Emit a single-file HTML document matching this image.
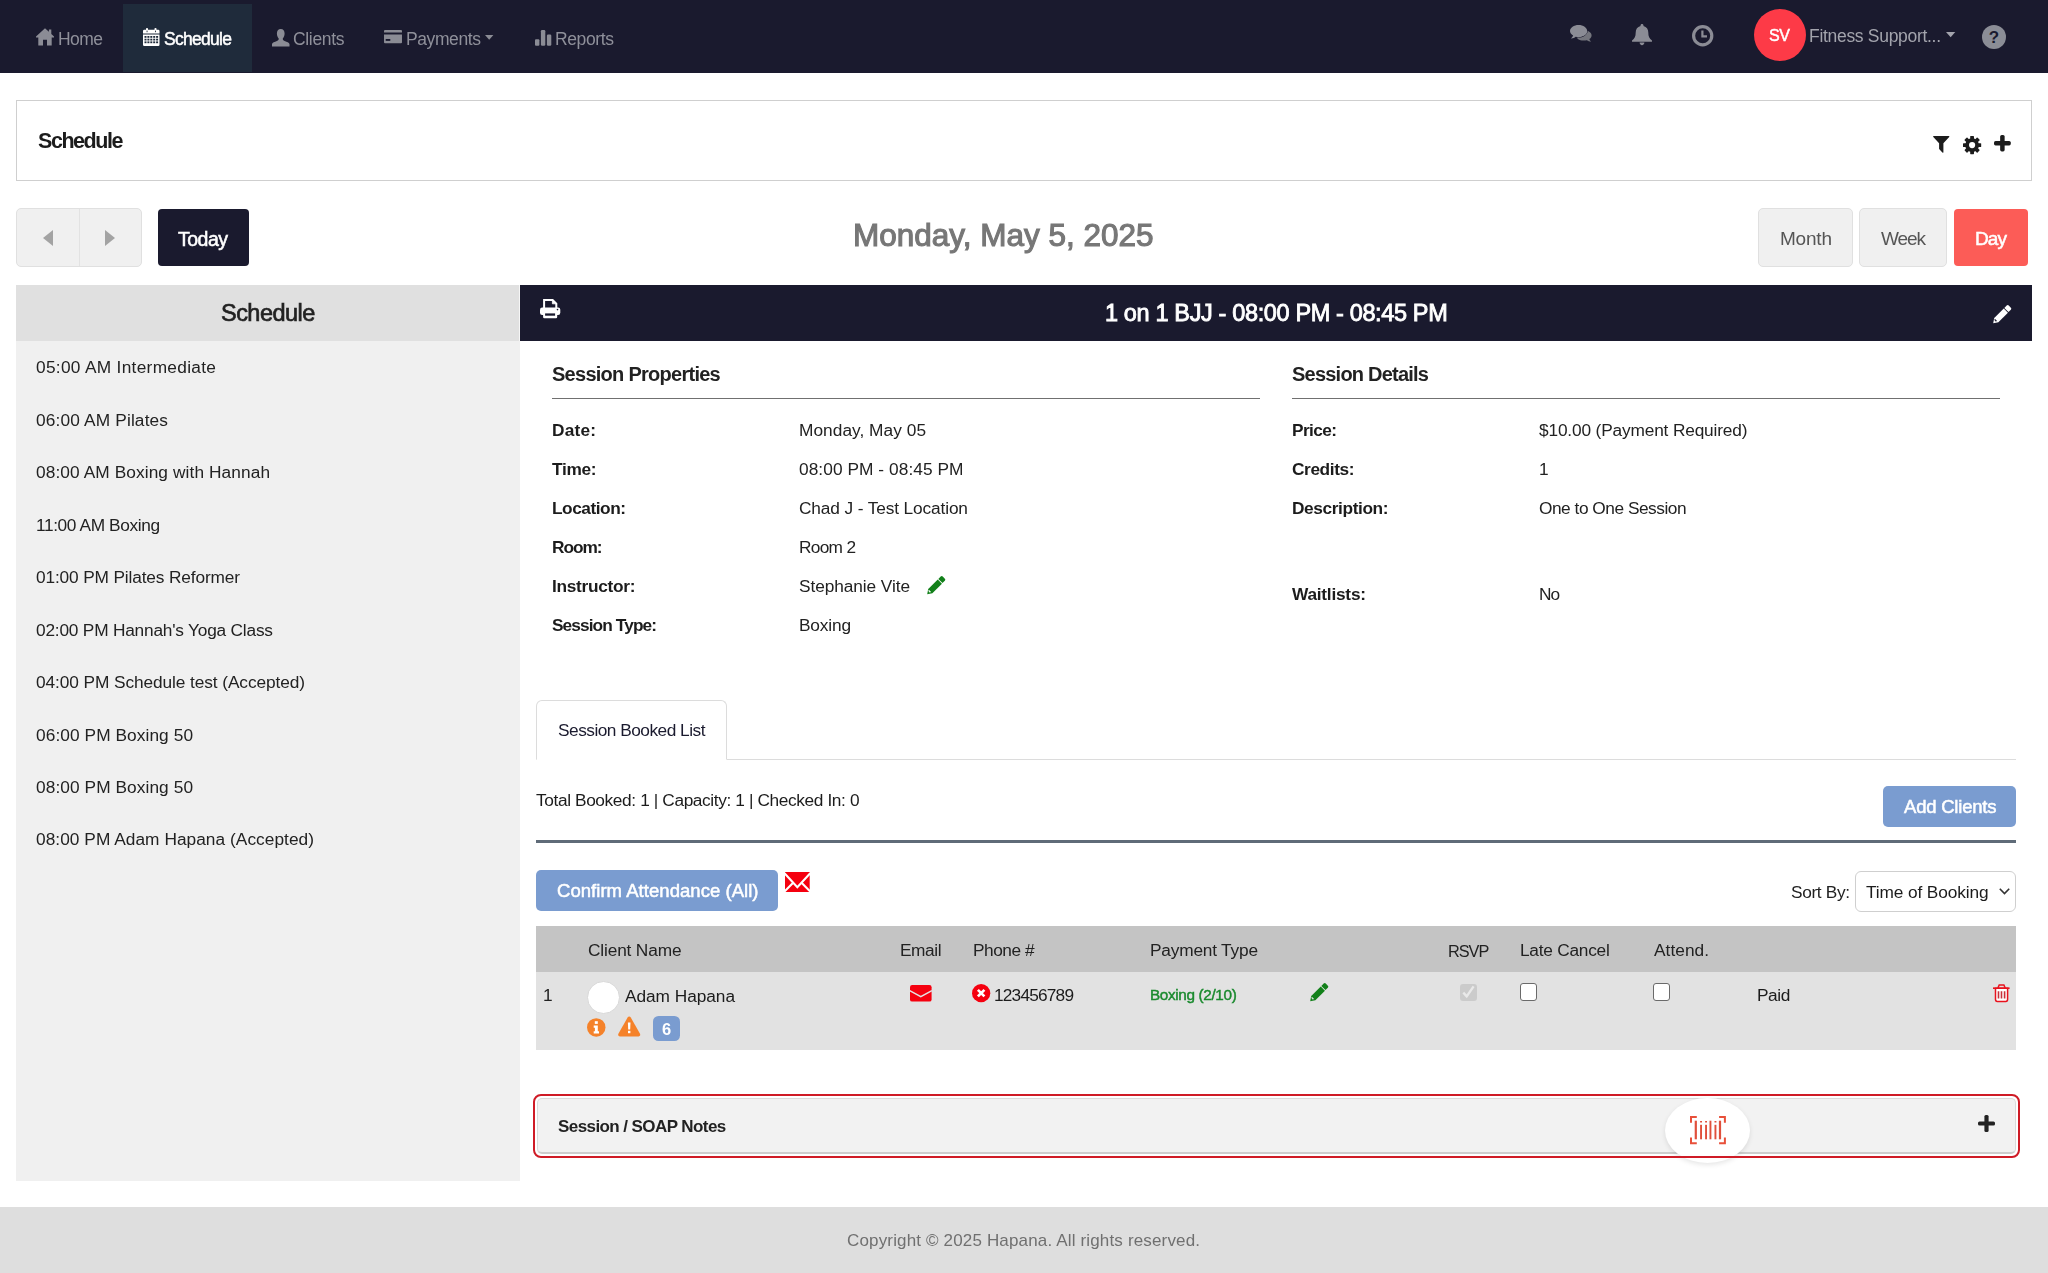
<!DOCTYPE html>
<html lang="en">
<head>
<meta charset="utf-8">
<title>Schedule</title>
<style>
html,body{margin:0;padding:0;background:#fff;}
body{width:2048px;height:1273px;position:relative;overflow:hidden;font-family:"Liberation Sans",sans-serif;}
.a{position:absolute;box-sizing:border-box;}
.t{will-change:transform;position:absolute;white-space:nowrap;line-height:1;font-family:"Liberation Sans",sans-serif;}
svg{position:absolute;overflow:visible;}
</style>
</head>
<body>
<!-- NAV -->
<div class="a" style="left:0;top:0;width:2048px;height:73px;background:#1a1a2e;"></div>
<div class="a" style="left:123px;top:4px;width:129px;height:68px;background:#1f2b3b;"></div>
<div class="a" style="left:1753.5px;top:9px;width:52px;height:52px;border-radius:50%;background:#fd3a47;"></div>

<!-- PAGE HEADER CARD -->
<div class="a" style="left:16px;top:100px;width:2016px;height:81px;border:1px solid #cfcfcf;background:#fff;"></div>

<!-- CONTROLS -->
<div class="a" style="left:16px;top:208px;width:126px;height:59px;background:#f0f0f0;border:1px solid #e0e0e0;border-radius:5px;"></div>
<div class="a" style="left:79px;top:209px;width:1px;height:57px;background:#e2e2e2;"></div>
<div class="a" style="left:157.5px;top:209px;width:91px;height:57px;background:#1a1a2e;border-radius:4px;"></div>
<div class="a" style="left:1758px;top:208px;width:95px;height:59px;background:#f0f0f0;border:1px solid #e0e0e0;border-radius:5px;"></div>
<div class="a" style="left:1859px;top:208px;width:88px;height:59px;background:#f0f0f0;border:1px solid #e0e0e0;border-radius:5px;"></div>
<div class="a" style="left:1954px;top:209px;width:74px;height:57px;background:#fc5c57;border-radius:4px;"></div>

<!-- LEFT PANEL -->
<div class="a" style="left:16px;top:285px;width:504px;height:895.5px;background:#f0f0f0;"></div>
<div class="a" style="left:16px;top:285px;width:503px;height:55.5px;background:#e0e0e0;"></div>
<div class="a" style="left:519px;top:285px;width:1px;height:55.5px;background:#f6f6f6;"></div>

<!-- RIGHT PANEL -->
<div class="a" style="left:520px;top:285px;width:1512px;height:55.5px;background:#1a1a2e;"></div>
<div class="a" style="left:552px;top:398px;width:708px;height:1px;background:#707070;"></div>
<div class="a" style="left:1292px;top:398px;width:708px;height:1px;background:#707070;"></div>

<!-- TABS -->
<div class="a" style="left:536px;top:758.5px;width:1480px;height:1px;background:#dcdcdc;"></div>
<div class="a" style="left:536px;top:700px;width:191px;height:59.5px;border:1px solid #dcdcdc;border-bottom:1px solid #fff;border-radius:6px 6px 0 0;background:#fff;"></div>

<!-- BOOKED BAR -->
<div class="a" style="left:1883px;top:786px;width:133px;height:41px;background:#7a9cd0;border-radius:5px;"></div>
<div class="a" style="left:536px;top:840px;width:1480px;height:3px;background:#5f6b78;"></div>
<div class="a" style="left:536px;top:870px;width:242px;height:41px;background:#7a9cd0;border-radius:5px;"></div>
<div class="a" style="left:1855px;top:870.5px;width:161px;height:41.5px;background:#fff;border:1px solid #cfcfcf;border-radius:6px;"></div>

<!-- TABLE -->
<div class="a" style="left:536px;top:926px;width:1480px;height:46px;background:#c4c4c4;"></div>
<div class="a" style="left:536px;top:972px;width:1480px;height:77.5px;background:#e2e2e2;"></div>
<div class="a" style="left:587px;top:981px;width:33px;height:33px;border-radius:50%;background:#fff;border:1px solid #d8d8d8;"></div>
<div class="a" style="left:653px;top:1016px;width:27px;height:24.5px;border-radius:5.5px;background:#7a9cd0;"></div>
<!-- checkboxes -->
<div class="a" style="left:1460px;top:983.5px;width:17px;height:17px;border-radius:3px;background:#cbcbcb;"></div>
<div class="a" style="left:1520px;top:983px;width:17px;height:17.5px;border-radius:3px;background:#fff;border:1.3px solid #6a6a6a;"></div>
<div class="a" style="left:1652.7px;top:983px;width:17px;height:17.5px;border-radius:3px;background:#fff;border:1.3px solid #6a6a6a;"></div>

<!-- SOAP -->
<div class="a" style="left:537px;top:1098px;width:1479px;height:55.5px;border:1px solid #dadada;border-bottom:2px solid #cdcdcd;border-radius:5px;background:#f2f2f2;"></div>
<div class="a" style="left:1665px;top:1097.5px;width:85px;height:65px;border-radius:50%;background:#fff;box-shadow:0 2px 5px rgba(0,0,0,0.10);"></div>
<div class="a" style="left:533px;top:1093.8px;width:1487px;height:64.7px;border:2.3px solid #cf1b26;border-radius:8px;background:transparent;"></div>

<!-- FOOTER -->
<div class="a" style="left:0;top:1207px;width:2048px;height:66px;background:#dedede;"></div>

<!-- nav icons -->
<svg style="left:36px;top:28px" width="18" height="18" viewBox="0 0 18 18"><path fill="#8b8c95" d="M9 0.2 L0 8.6 L0 9.6 L2.3 9.6 L2.3 17.6 L7 17.6 L7 11.8 L11 11.8 L11 17.6 L15.7 17.6 L15.7 9.6 L18 9.6 L18 8.6 L15.3 6.1 L15.3 1.6 L12.9 1.6 L12.9 3.8 Z"/></svg>
<svg style="left:142.5px;top:28px" width="16.5" height="18" viewBox="0 0 16.5 18"><g fill="#fff"><rect x="3" y="0" width="2" height="3.6" rx="0.8"/><rect x="11.5" y="0" width="2" height="3.6" rx="0.8"/><path d="M1.2 1.8 H15.3 Q16.5 1.8 16.5 3 V5.6 H0 V3 Q0 1.8 1.2 1.8 Z"/><path d="M0 6.6 H16.5 V16.8 Q16.5 18 15.3 18 H1.2 Q0 18 0 16.8 Z"/></g><g fill="#1f2b3b"><rect x="3.6" y="2.6" width="0.9" height="1.6"/><rect x="12" y="2.6" width="0.9" height="1.6"/>
<rect x="1.5" y="8" width="2" height="1.8"/><rect x="4.4" y="8" width="2" height="1.8"/><rect x="7.3" y="8" width="2" height="1.8"/><rect x="10.2" y="8" width="2" height="1.8"/><rect x="13.1" y="8" width="2" height="1.8"/>
<rect x="1.5" y="10.7" width="2" height="1.8"/><rect x="4.4" y="10.7" width="2" height="1.8"/><rect x="7.3" y="10.7" width="2" height="1.8"/><rect x="10.2" y="10.7" width="2" height="1.8"/><rect x="13.1" y="10.7" width="2" height="1.8"/>
<rect x="1.5" y="13.4" width="2" height="1.8"/><rect x="4.4" y="13.4" width="2" height="1.8"/><rect x="7.3" y="13.4" width="2" height="1.8"/><rect x="10.2" y="13.4" width="2" height="1.8"/><rect x="13.1" y="13.4" width="2" height="1.8"/></g></svg>
<svg style="left:272px;top:28.5px" width="17.5" height="17.5" viewBox="0 0 17.5 17.5"><path fill="#8b8c95" d="M8.75 0 C11.3 0 12.6 1.9 12.6 4.6 C12.6 6.6 11.9 8.4 10.8 9.4 C10.6 10.6 11.2 11.4 12.6 11.9 C15 12.8 17 13.4 17.5 15 L17.5 17.5 L0 17.5 L0 15 C0.5 13.4 2.5 12.8 4.9 11.9 C6.3 11.4 6.9 10.6 6.7 9.4 C5.6 8.4 4.9 6.6 4.9 4.6 C4.9 1.9 6.2 0 8.75 0 Z"/></svg>
<svg style="left:384px;top:30px" width="18" height="13.2" viewBox="0 0 18 13.2"><g fill="#8b8c95"><path d="M1 0 H17 Q18 0 18 1 V2.6 H0 V1 Q0 0 1 0 Z"/><path d="M0 4.4 H18 V12.2 Q18 13.2 17 13.2 H1 Q0 13.2 0 12.2 Z"/></g><rect x="1.7" y="9" width="4.6" height="1.9" fill="#1a1a2e"/></svg>
<svg style="left:485px;top:35px" width="8.4" height="4.8" viewBox="0 0 8.4 4.8"><path fill="#8b8c95" d="M0 0 H8.4 L4.2 4.8 Z"/></svg>
<svg style="left:535px;top:30px" width="16.3" height="15.8" viewBox="0 0 16.3 15.8"><g fill="#8b8c95"><rect x="0" y="9.2" width="4.4" height="6.6" rx="1"/><rect x="5.9" y="0" width="4.4" height="15.8" rx="1.2"/><rect x="11.9" y="4.6" width="4.4" height="11.2" rx="1.2"/></g></svg>
<!-- right nav icons -->
<svg style="left:1570px;top:25.3px" width="21.6" height="16.8" viewBox="0 0 21.6 16.8"><path fill="#74757d" d="M13.5 5.2 C18 5.2 21.6 7.4 21.6 10.4 C21.6 11.9 20.7 13.2 19.3 14.1 C19.6 15.2 20.3 16 21.2 16.6 C19.6 16.7 18.1 16.2 16.9 15.2 C15.9 15.5 14.7 15.6 13.5 15.6 C9 15.6 6.4 13.4 6.4 10.4 Z"/><path fill="#8b8c95" stroke="#1a1a2e" stroke-width="1" paint-order="stroke" d="M8.6 0 C13.3 0 17.2 2.7 17.2 6.1 C17.2 9.5 13.3 12.2 8.6 12.2 C7.6 12.2 6.6 12.1 5.7 11.8 C4.4 12.9 2.8 13.5 1 13.4 C2 12.7 2.8 11.7 3.1 10.6 C1.2 9.5 0 7.9 0 6.1 C0 2.7 3.9 0 8.6 0 Z"/></svg>
<svg style="left:1632px;top:23.5px" width="20" height="21.2" viewBox="0 0 20 21.2"><path fill="#8b8c95" d="M10 0 C10.9 0 11.5 0.6 11.5 1.5 L11.5 2 C14.6 2.7 16.3 5.4 16.3 8.6 C16.3 12.6 17.4 14.8 20 16.6 L20 17.8 L0 17.8 L0 16.6 C2.6 14.8 3.7 12.6 3.7 8.6 C3.7 5.4 5.4 2.7 8.5 2 L8.5 1.5 C8.5 0.6 9.1 0 10 0 Z M7.6 18.6 H12.4 C12.4 20.1 11.4 21.2 10 21.2 C8.6 21.2 7.6 20.1 7.6 18.6 Z"/></svg>
<svg style="left:1692.2px;top:24.9px" width="21.4" height="21.4" viewBox="0 0 21.4 21.4"><circle cx="10.7" cy="10.7" r="9.1" fill="none" stroke="#8b8c95" stroke-width="3.2"/><path d="M10.4 5.6 V11.4 H15" fill="none" stroke="#8b8c95" stroke-width="2.2"/></svg>
<svg style="left:1945.8px;top:32px" width="9.3" height="5.2" viewBox="0 0 9.3 5.2"><path fill="#a3a4ad" d="M0 0 H9.3 L4.65 5.2 Z"/></svg>
<svg style="left:1981.5px;top:24.5px" width="24" height="24" viewBox="0 0 24 24"><circle cx="12" cy="12" r="12" fill="#8b8d96"/><text x="12" y="17.8" text-anchor="middle" font-family="Liberation Sans, sans-serif" font-weight="700" font-size="17" fill="#1a1a2e">?</text></svg>
<!-- header card icons -->
<svg style="left:1932.6px;top:136px" width="16.5" height="17" viewBox="0 0 16.5 17"><path fill="#1c1c1c" d="M0.6 0 H15.9 Q16.9 0.3 16.2 1.1 L10.4 7.3 V16.3 Q10.2 17.2 9.4 16.6 L6.1 13.1 V7.3 L0.3 1.1 Q-0.4 0.3 0.6 0 Z"/></svg>
<svg style="left:1962.7px;top:136px" width="18.2" height="18.2" viewBox="-9.1 -9.1 18.2 18.2"><g fill="#1c1c1c"><circle r="6.9"/><g id="gt"><rect x="-1.9" y="-9.1" width="3.8" height="18.2" rx="0.6"/></g><use href="#gt" transform="rotate(45)"/><use href="#gt" transform="rotate(90)"/><use href="#gt" transform="rotate(135)"/></g><circle r="3.1" fill="#fff"/></svg>
<svg style="left:1994px;top:134.8px" width="16.8" height="16.4" viewBox="0 0 16.8 16.4"><g fill="#1c1c1c"><rect x="6.15" y="0" width="4.5" height="16.4" rx="1.6"/><rect x="0" y="5.95" width="16.8" height="4.5" rx="1.6"/></g></svg>
<!-- prev / next -->
<svg style="left:43px;top:230px" width="10" height="16" viewBox="0 0 10 16"><path fill="#a3a3a3" d="M10 0 V16 L0 8 Z"/></svg>
<svg style="left:105px;top:230px" width="10" height="16" viewBox="0 0 10 16"><path fill="#a3a3a3" d="M0 0 V16 L10 8 Z"/></svg>
<!-- print -->
<svg style="left:539.8px;top:299px" width="20.3" height="19.3" viewBox="0 0 20.3 19.3"><path d="M4.1 9 V1 H12.6 L16.3 4.6 V9" fill="none" stroke="#fff" stroke-width="2"/><path d="M12.4 1 V4.8 H16.3" fill="#fff" stroke="#fff" stroke-width="0.8"/><rect x="0" y="8.6" width="20.3" height="7.4" rx="2.2" fill="#fff"/><rect x="3.1" y="13" width="14.1" height="6.3" rx="1.2" fill="#fff"/><rect x="5.1" y="14.4" width="10" height="2.3" fill="#1a1a2e"/><circle cx="17.5" cy="10.6" r="0.8" fill="#1a1a2e"/></svg>
<!-- pencils -->
<svg style="left:1993.4px;top:304.8px" width="18.7" height="18.5" viewBox="0 0 18.7 18.5"><g transform="translate(0.2,18.2) rotate(-45)"><path fill="#fff" d="M0 0 L4.4 -2.95 H17.9 V2.95 H4.4 Z"/><path fill="#fff" d="M18.7 -2.95 H22 Q23.5 -2.95 23.5 -1.5 V1.5 Q23.5 2.95 22 2.95 H18.7 Z"/><path d="M3.7 -1.7 V0.9" stroke="#1a1a2e" stroke-width="1.4"/></g></svg>
<svg style="left:926.8px;top:575.8px" width="18.7" height="18.5" viewBox="0 0 18.7 18.5"><g transform="translate(0.2,18.2) rotate(-45)"><path fill="#12801a" d="M0 0 L4.4 -2.95 H17.9 V2.95 H4.4 Z"/><path fill="#12801a" d="M18.7 -2.95 H22 Q23.5 -2.95 23.5 -1.5 V1.5 Q23.5 2.95 22 2.95 H18.7 Z"/><path d="M3.7 -1.7 V0.9" stroke="#fff" stroke-width="1.4"/></g></svg>
<svg style="left:1309.8px;top:982.5px" width="18.7" height="18.5" viewBox="0 0 18.7 18.5"><g transform="translate(0.2,18.2) rotate(-45)"><path fill="#12801a" d="M0 0 L4.4 -2.95 H17.9 V2.95 H4.4 Z"/><path fill="#12801a" d="M18.7 -2.95 H22 Q23.5 -2.95 23.5 -1.5 V1.5 Q23.5 2.95 22 2.95 H18.7 Z"/><path d="M3.7 -1.7 V0.9" stroke="#e2e2e2" stroke-width="1.4"/></g></svg>
<!-- mail X -->
<svg style="left:785px;top:872.2px" width="24.7" height="20" viewBox="0 0 24.7 20"><rect width="24.7" height="20" fill="#f5000f"/><path d="M-0.5 1.2 L12.35 15.2 L25.2 1.2" fill="none" stroke="#fff" stroke-width="2.1"/><path d="M-0.5 19.4 L8.4 10.4 M25.2 19.4 L16.3 10.4" stroke="#fff" stroke-width="2.1"/></svg>
<!-- row email -->
<svg style="left:910px;top:985.4px" width="21.6" height="16.6" viewBox="0 0 21.6 16.6"><rect width="21.6" height="16.6" rx="2.2" fill="#f5000f"/><path d="M-0.3 5.6 L10.8 11.6 L21.9 5.6" fill="none" stroke="#e2e2e2" stroke-width="1.5"/></svg>
<!-- phone X circle -->
<svg style="left:971.8px;top:983.9px" width="18.3" height="18.3" viewBox="0 0 18.3 18.3"><circle cx="9.15" cy="9.15" r="9.15" fill="#f5000f"/><path d="M5.9 5.9 L12.4 12.4 M12.4 5.9 L5.9 12.4" stroke="#fff" stroke-width="2.7"/></svg>
<!-- rsvp check -->
<svg style="left:1460px;top:983.4px" width="17" height="17" viewBox="0 0 17 17"><path d="M3.3 9.6 L6.7 13.4 L13.6 3.4" fill="none" stroke="#e9e9e9" stroke-width="2.4"/></svg>
<!-- trash -->
<svg style="left:1992.6px;top:984px" width="16.6" height="18.2" viewBox="0 0 16.6 18.2"><path d="M2.5 4.3 H14.6 V15.6 Q14.6 17.4 12.8 17.4 H4.3 Q2.5 17.4 2.5 15.6 Z" fill="#fff" stroke="#e8121d" stroke-width="1.5"/><path d="M0 4.2 H16.6" stroke="#e8121d" stroke-width="1.6"/><path d="M4.9 4 L6.2 0.9 H10.9 L12.2 4" fill="none" stroke="#e8121d" stroke-width="1.5"/><path d="M5.5 7.2 V14.4 M8.5 7.2 V14.4 M11.6 7.2 V14.4" stroke="#c7303a" stroke-width="1.6"/></svg>
<!-- info / warning -->
<svg style="left:587px;top:1018px" width="18.5" height="18.8" viewBox="0 0 18.5 18.8"><circle cx="9.25" cy="9.4" r="9.25" fill="#f5822a"/><g fill="#fff"><rect x="7.8" y="3.2" width="3" height="2.7"/><path d="M6.7 7.6 H10.8 V13.2 H12 V15.4 H6.7 V13.2 H7.9 V9.8 H6.7 Z"/></g></svg>
<svg style="left:617.7px;top:1016.2px" width="22.4" height="20.6" viewBox="0 0 22.4 20.6"><path fill="#f5822a" d="M11.2 0.6 Q12.2 0.6 12.8 1.6 L22 17.8 Q22.9 20.2 20.6 20.4 H1.8 Q-0.5 20.2 0.4 17.8 L9.6 1.6 Q10.2 0.6 11.2 0.6 Z"/><g fill="#fff"><path d="M9.9 6.6 H12.5 L12.2 13.4 H10.2 Z"/><rect x="10" y="14.8" width="2.4" height="2.4"/></g></svg>
<!-- select chevron -->
<svg style="left:1999px;top:888px" width="11" height="7" viewBox="0 0 11 7"><path d="M0.8 0.8 L5.5 5.6 L10.2 0.8" fill="none" stroke="#333" stroke-width="1.6"/></svg>
<!-- soap plus -->
<svg style="left:1978px;top:1114.6px" width="17" height="17" viewBox="0 0 17 17"><g fill="#222"><rect x="6.4" y="0" width="4.2" height="17" rx="1.5"/><rect x="0" y="6.4" width="17" height="4.2" rx="1.5"/></g></svg>
<!-- barcode -->
<svg style="left:1689.9px;top:1115.5px" width="35.9" height="28.3" viewBox="0 0 35.9 28.3"><g fill="none" stroke="#e8503a" stroke-width="2"><path d="M1 6.8 V1 H6.8"/><path d="M29.1 1 H34.9 V6.8"/><path d="M1 21.5 V27.3 H6.8"/><path d="M29.1 27.3 H34.9 V21.5"/></g><g fill="#e0503c"><rect x="4.7" y="4.7" width="2.2" height="18.6"/><rect x="10.1" y="5" width="1.9" height="1.5"/><rect x="10.1" y="8.8" width="1.9" height="14.5"/><rect x="15.1" y="5" width="1.9" height="1.5"/><rect x="15.1" y="8.8" width="1.9" height="14.5"/><rect x="19.5" y="4.7" width="1.9" height="18.6"/><rect x="24.5" y="5" width="1.9" height="1.5"/><rect x="24.5" y="8.8" width="1.9" height="14.5"/><rect x="28.9" y="4.7" width="2.2" height="18.6"/></g></svg>

<span class="t" style="left:57.50px;top:30.99px;font-size:17.5px;font-weight:400;color:#8f909a;letter-spacing:-0.562px;">Home</span>
<span class="t" style="left:164.00px;top:30.99px;font-size:17.5px;font-weight:400;color:#ffffff;letter-spacing:-0.712px;-webkit-text-stroke:0.49px currentColor;">Schedule</span>
<span class="t" style="left:293.00px;top:30.99px;font-size:17.5px;font-weight:400;color:#8f909a;letter-spacing:-0.333px;">Clients</span>
<span class="t" style="left:405.50px;top:30.99px;font-size:17.5px;font-weight:400;color:#8f909a;letter-spacing:-0.402px;">Payments</span>
<span class="t" style="left:555.00px;top:30.99px;font-size:17.5px;font-weight:400;color:#8f909a;letter-spacing:-0.380px;">Reports</span>
<span class="t" style="left:1769.00px;top:28.26px;font-size:16px;font-weight:400;color:#ffffff;letter-spacing:-0.344px;-webkit-text-stroke:0.45px currentColor;">SV</span>
<span class="t" style="left:1809.00px;top:27.99px;font-size:17.5px;font-weight:400;color:#a3a4ad;letter-spacing:-0.303px;">Fitness Support...</span>
<span class="t" style="left:37.50px;top:130.90px;font-size:21.5px;font-weight:700;color:#1c1c1c;letter-spacing:-1.442px;">Schedule</span>
<span class="t" style="left:178.00px;top:229.79px;font-size:19.5px;font-weight:400;color:#ffffff;letter-spacing:-0.512px;-webkit-text-stroke:0.55px currentColor;">Today</span>
<span class="t" style="left:852.50px;top:220.14px;font-size:31.5px;font-weight:400;color:#777777;letter-spacing:-0.005px;-webkit-text-stroke:1.13px currentColor;">Monday, May 5, 2025</span>
<span class="t" style="left:1780.00px;top:228.92px;font-size:19px;font-weight:400;color:#555555;letter-spacing:-0.203px;">Month</span>
<span class="t" style="left:1881.00px;top:228.92px;font-size:19px;font-weight:400;color:#555555;letter-spacing:-1.078px;">Week</span>
<span class="t" style="left:1975.00px;top:228.92px;font-size:19px;font-weight:400;color:#ffffff;letter-spacing:-0.898px;-webkit-text-stroke:0.53px currentColor;">Day</span>
<span class="t" style="left:220.75px;top:301.91px;font-size:23.5px;font-weight:400;color:#222222;letter-spacing:-0.536px;-webkit-text-stroke:0.66px currentColor;">Schedule</span>
<span class="t" style="left:1105.00px;top:301.91px;font-size:23.5px;font-weight:400;color:#ffffff;letter-spacing:-0.362px;-webkit-text-stroke:0.85px currentColor;">1 on 1 BJJ - 08:00 PM - 08:45 PM</span>
<span class="t" style="left:552.00px;top:363.87px;font-size:20px;font-weight:700;color:#222222;letter-spacing:-0.732px;">Session Properties</span>
<span class="t" style="left:1292.00px;top:363.87px;font-size:20px;font-weight:700;color:#222222;letter-spacing:-0.775px;">Session Details</span>
<span class="t" style="left:36.00px;top:359.36px;font-size:17.3px;font-weight:400;color:#222222;letter-spacing:0.305px;">05:00 AM Intermediate</span>
<span class="t" style="left:36.00px;top:411.81px;font-size:17.3px;font-weight:400;color:#222222;letter-spacing:0.154px;">06:00 AM Pilates</span>
<span class="t" style="left:36.00px;top:464.26px;font-size:17.3px;font-weight:400;color:#222222;letter-spacing:0.095px;">08:00 AM Boxing with Hannah</span>
<span class="t" style="left:36.00px;top:516.71px;font-size:17.3px;font-weight:400;color:#222222;letter-spacing:-0.384px;">11:00 AM Boxing</span>
<span class="t" style="left:36.00px;top:569.16px;font-size:17.3px;font-weight:400;color:#222222;letter-spacing:-0.145px;">01:00 PM Pilates Reformer</span>
<span class="t" style="left:36.00px;top:621.61px;font-size:17.3px;font-weight:400;color:#222222;letter-spacing:-0.205px;">02:00 PM Hannah's Yoga Class</span>
<span class="t" style="left:36.00px;top:674.06px;font-size:17.3px;font-weight:400;color:#222222;letter-spacing:-0.089px;">04:00 PM Schedule test (Accepted)</span>
<span class="t" style="left:36.00px;top:726.51px;font-size:17.3px;font-weight:400;color:#222222;letter-spacing:0.080px;">06:00 PM Boxing 50</span>
<span class="t" style="left:36.00px;top:778.96px;font-size:17.3px;font-weight:400;color:#222222;letter-spacing:0.080px;">08:00 PM Boxing 50</span>
<span class="t" style="left:36.00px;top:831.41px;font-size:17.3px;font-weight:400;color:#222222;letter-spacing:0.044px;">08:00 PM Adam Hapana (Accepted)</span>
<span class="t" style="left:552.00px;top:421.66px;font-size:17.3px;font-weight:700;color:#1c1c1c;letter-spacing:0.195px;">Date:</span>
<span class="t" style="left:799.00px;top:421.66px;font-size:17.3px;font-weight:400;color:#222222;letter-spacing:0.040px;">Monday, May 05</span>
<span class="t" style="left:552.00px;top:460.81px;font-size:17.3px;font-weight:700;color:#1c1c1c;letter-spacing:-0.320px;">Time:</span>
<span class="t" style="left:799.00px;top:460.81px;font-size:17.3px;font-weight:400;color:#222222;letter-spacing:0.067px;">08:00 PM - 08:45 PM</span>
<span class="t" style="left:552.00px;top:499.96px;font-size:17.3px;font-weight:700;color:#1c1c1c;letter-spacing:-0.471px;">Location:</span>
<span class="t" style="left:799.00px;top:499.96px;font-size:17.3px;font-weight:400;color:#222222;letter-spacing:-0.126px;">Chad J - Test Location</span>
<span class="t" style="left:552.00px;top:539.11px;font-size:17.3px;font-weight:700;color:#1c1c1c;letter-spacing:-1.055px;">Room:</span>
<span class="t" style="left:799.00px;top:539.11px;font-size:17.3px;font-weight:400;color:#222222;letter-spacing:-0.703px;">Room 2</span>
<span class="t" style="left:552.00px;top:578.26px;font-size:17.3px;font-weight:700;color:#1c1c1c;letter-spacing:-0.291px;">Instructor:</span>
<span class="t" style="left:799.00px;top:578.26px;font-size:17.3px;font-weight:400;color:#222222;letter-spacing:-0.085px;">Stephanie Vite</span>
<span class="t" style="left:552.00px;top:617.41px;font-size:17.3px;font-weight:700;color:#1c1c1c;letter-spacing:-0.908px;">Session Type:</span>
<span class="t" style="left:799.00px;top:617.41px;font-size:17.3px;font-weight:400;color:#222222;letter-spacing:-0.169px;">Boxing</span>
<span class="t" style="left:1292.00px;top:421.66px;font-size:17.3px;font-weight:700;color:#1c1c1c;letter-spacing:-0.606px;">Price:</span>
<span class="t" style="left:1539.00px;top:421.66px;font-size:17.3px;font-weight:400;color:#222222;letter-spacing:-0.158px;">$10.00 (Payment Required)</span>
<span class="t" style="left:1292.00px;top:460.81px;font-size:17.3px;font-weight:700;color:#1c1c1c;letter-spacing:-0.400px;">Credits:</span>
<span class="t" style="left:1539.00px;top:460.81px;font-size:17.3px;font-weight:400;color:#222222;letter-spacing:0.000px;">1</span>
<span class="t" style="left:1292.00px;top:499.96px;font-size:17.3px;font-weight:700;color:#1c1c1c;letter-spacing:-0.393px;">Description:</span>
<span class="t" style="left:1539.00px;top:499.96px;font-size:17.3px;font-weight:400;color:#222222;letter-spacing:-0.478px;">One to One Session</span>
<span class="t" style="left:1292.00px;top:586.36px;font-size:17.3px;font-weight:700;color:#1c1c1c;letter-spacing:-0.241px;">Waitlists:</span>
<span class="t" style="left:1539.00px;top:586.36px;font-size:17.3px;font-weight:400;color:#222222;letter-spacing:-1.094px;">No</span>
<span class="t" style="left:557.50px;top:721.66px;font-size:17.3px;font-weight:400;color:#1a1a2e;letter-spacing:-0.505px;">Session Booked List</span>
<span class="t" style="left:536.00px;top:791.66px;font-size:17.3px;font-weight:400;color:#1c1c1c;letter-spacing:-0.384px;">Total Booked: 1 | Capacity: 1 | Checked In: 0</span>
<span class="t" style="left:1903.50px;top:798.14px;font-size:18.5px;font-weight:400;color:#ffffff;letter-spacing:-0.211px;-webkit-text-stroke:0.52px currentColor;">Add Clients</span>
<span class="t" style="left:556.50px;top:882.14px;font-size:18.5px;font-weight:400;color:#ffffff;letter-spacing:0.043px;-webkit-text-stroke:0.52px currentColor;">Confirm Attendance (All)</span>
<span class="t" style="left:1791.00px;top:883.66px;font-size:17.3px;font-weight:400;color:#222222;letter-spacing:-0.353px;">Sort By:</span>
<span class="t" style="left:1866.00px;top:883.66px;font-size:17.3px;font-weight:400;color:#1c1c1c;letter-spacing:-0.124px;">Time of Booking</span>
<span class="t" style="left:587.50px;top:942.16px;font-size:17.3px;font-weight:400;color:#222222;letter-spacing:-0.159px;">Client Name</span>
<span class="t" style="left:900.00px;top:942.16px;font-size:17.3px;font-weight:400;color:#222222;letter-spacing:-0.430px;">Email</span>
<span class="t" style="left:972.50px;top:942.16px;font-size:17.3px;font-weight:400;color:#222222;letter-spacing:-0.482px;">Phone #</span>
<span class="t" style="left:1149.75px;top:942.16px;font-size:17.3px;font-weight:400;color:#222222;letter-spacing:-0.196px;">Payment Type</span>
<span class="t" style="left:1447.75px;top:943.00px;font-size:16.3px;font-weight:400;color:#222222;letter-spacing:-1.031px;">RSVP</span>
<span class="t" style="left:1520.00px;top:942.16px;font-size:17.3px;font-weight:400;color:#222222;letter-spacing:-0.248px;">Late Cancel</span>
<span class="t" style="left:1653.50px;top:942.16px;font-size:17.3px;font-weight:400;color:#222222;letter-spacing:0.039px;">Attend.</span>
<span class="t" style="left:542.50px;top:986.91px;font-size:17.3px;font-weight:400;color:#222222;letter-spacing:0.000px;">1</span>
<span class="t" style="left:625.00px;top:988.16px;font-size:17.3px;font-weight:400;color:#1c1c1c;letter-spacing:-0.048px;">Adam Hapana</span>
<span class="t" style="left:994.00px;top:987.16px;font-size:17.3px;font-weight:400;color:#1c1c1c;letter-spacing:-0.812px;">123456789</span>
<span class="t" style="left:1149.75px;top:987.25px;font-size:15.3px;font-weight:400;color:#1a8a2e;letter-spacing:-0.353px;-webkit-text-stroke:0.43px currentColor;">Boxing (2/10)</span>
<span class="t" style="left:1756.50px;top:986.66px;font-size:17.3px;font-weight:400;color:#1c1c1c;letter-spacing:-0.448px;">Paid</span>
<span class="t" style="left:662.10px;top:1021.13px;font-size:16.5px;font-weight:700;color:#ffffff;letter-spacing:0.000px;">6</span>
<span class="t" style="left:557.50px;top:1118.16px;font-size:17px;font-weight:700;color:#222222;letter-spacing:-0.576px;">Session / SOAP Notes</span>
<span class="t" style="left:847.00px;top:1232.41px;font-size:17px;font-weight:400;color:#707070;letter-spacing:0.157px;">Copyright © 2025 Hapana. All rights reserved.</span>
</body>
</html>
